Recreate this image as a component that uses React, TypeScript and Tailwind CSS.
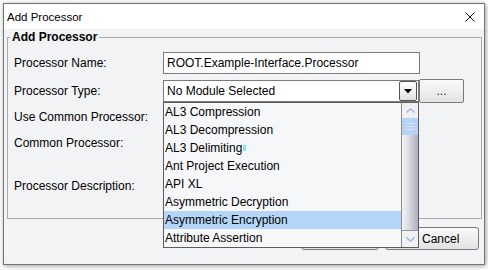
const ITEMS = [
  "AL3 Compression",
  "AL3 Decompression",
  "AL3 Delimiting",
  "Ant Project Execution",
  "API XL",
  "Asymmetric Decryption",
  "Asymmetric Encryption",
  "Attribute Assertion",
];

function Label({ text }: { text: string }) {
  return <span className="w-[149px] shrink-0 text-[12px] leading-[16px] text-black">{text}</span>;
}

export default function App() {
  return (
    <div className="relative h-[270px] w-[488px] overflow-hidden bg-white pl-[3px] pt-[3px] font-['Liberation_Sans',Arial,sans-serif]">
      <div className="flex h-[262px] w-[482px] flex-col border border-[#747474] bg-[#f2f3f5] shadow-[1px_1px_5px_rgba(0,0,0,0.4)]">
        {/* title bar */}
        <div className="flex h-[25px] shrink-0 items-center justify-between bg-white pl-[3px] pr-[9px]">
          <span className="text-[11.5px] leading-[14px] text-black">Add Processor</span>
          <svg width="10" height="10" viewBox="0 0 10 10">
            <path d="M0.5 0.5 L9.5 9.5 M9.5 0.5 L0.5 9.5" stroke="#111" strokeWidth="1" />
          </svg>
        </div>

        <div className="flex flex-1 flex-col">
          <fieldset className="ml-[3px] h-[190px] w-[475px] border border-[#aaaaaa]">
            <legend className="ml-[2px] px-[2px] text-[12px] font-bold leading-[16px] text-black">Add Processor</legend>
            <div className="flex flex-col pl-[6px] pt-[7px]">
              <div className="flex h-[22px] items-center">
                <Label text="Processor Name:" />
                <div className="flex h-[22px] w-[257px] items-center border border-[#7a7a7a] bg-white pl-[3px] text-[12px] text-black">
                  ROOT.Example-Interface.Processor
                </div>
              </div>

              <div className="mt-[6px] flex h-[22px] items-center">
                <Label text="Processor Type:" />
                <div className="relative flex h-[22px] w-[256px] items-center border border-[#7a7a7a] bg-white pl-[3px] text-[12px] text-black">
                  <span className="flex-1">No Module Selected</span>
                  <div className="mr-[1px] flex h-[20px] w-[18px] items-center justify-center rounded-[2px] border border-[#555] bg-gradient-to-b from-white to-[#e2e2e2]">
                    <svg width="8" height="5" viewBox="0 0 8 5">
                      <path d="M0 0 H8 L4 4.5 Z" fill="#000" />
                    </svg>
                  </div>

                  {/* open popup list */}
                  <div className="absolute left-[-1px] top-[21px] z-10 flex h-[146px] w-[256px] border border-[#5c5c5c] bg-[#f6f7f9]">
                    <div className="flex flex-1 flex-col">
                      {ITEMS.map((item) => (
                        <div
                          key={item}
                          className={
                            item === "Asymmetric Encryption"
                              ? "flex h-[18px] items-center bg-[#b5d6f8] pl-[1px] text-[12px] text-black"
                              : "flex h-[18px] items-center pl-[1px] text-[12px] text-black"
                          }
                        >
                          {item}
                          {item === "AL3 Delimiting" && <span className="ml-[1px] h-[6px] w-[3px] bg-[#86e2fb]" />}
                        </div>
                      ))}
                    </div>
                    <div className="flex w-[17px] flex-col border-l border-[#8d8d8d]">
                      <div className="flex h-[15px] items-center justify-center bg-[#eef0f3]">
                        <svg width="9" height="5" viewBox="0 0 9 5">
                          <path d="M0.5 4.5 L4.5 0.8 L8.5 4.5" fill="none" stroke="#8fb3df" strokeWidth="1.2" />
                        </svg>
                      </div>
                      <div className="flex h-[17px] flex-col items-center justify-center gap-[2px] bg-[#b6d3f6]">
                        <span className="h-px w-[8px] bg-[#dbe8fa]" />
                        <span className="h-px w-[8px] bg-[#dbe8fa]" />
                        <span className="h-px w-[8px] bg-[#dbe8fa]" />
                      </div>
                      <div className="flex-1 bg-gradient-to-r from-[#f3f3f6] via-[#d6d6de] to-[#aeaebd]" />
                      <div className="flex h-[17px] items-center justify-center border-t border-[#9a9a9a] bg-[#eef0f3]">
                        <svg width="9" height="5" viewBox="0 0 9 5">
                          <path d="M0.5 0.5 L4.5 4.2 L8.5 0.5" fill="none" stroke="#8fb3df" strokeWidth="1.2" />
                        </svg>
                      </div>
                    </div>
                  </div>
                </div>
                <div className="flex h-[24px] w-[45px] items-center justify-center rounded-[2px] border border-[#7a7a7a] bg-gradient-to-b from-[#fbfbfb] to-[#e3e3e3] text-[12px] text-[#222]">
                  ...
                </div>
              </div>

              <div className="mt-[4px] flex h-[22px] items-center">
                <Label text="Use Common Processor:" />
              </div>
              <div className="mt-[4px] flex h-[22px] items-center">
                <Label text="Common Processor:" />
              </div>
              <div className="mt-[24px] flex items-start">
                <Label text="Processor Description:" />
              </div>
            </div>
          </fieldset>

          <div className="mt-[8px] flex justify-end gap-[6px] pr-[5px]">
            <div className="flex h-[23px] w-[78px] items-center justify-center rounded-[3px] border border-[#7a7a7a] bg-gradient-to-b from-[#fafafa] to-[#e1e1e1] text-[12px] text-black">
              OK
            </div>
            <div className="flex h-[23px] w-[94px] items-center rounded-[3px] border border-[#7a7a7a] bg-gradient-to-b from-[#fafafa] to-[#e1e1e1] pl-[36px] text-[12px] text-black">
              Cancel
            </div>
          </div>
        </div>
      </div>

      {/* red annotation arrow */}
      <svg className="pointer-events-none absolute left-0 top-0" width="488" height="270" viewBox="0 0 488 270">
        <line x1="388" y1="133" x2="333" y2="201" stroke="#f50c0c" strokeWidth="5" strokeLinecap="round" />
        <path d="M316 218 L323 194 L342 209 Z" fill="#f50c0c" stroke="#f50c0c" strokeWidth="1" strokeLinejoin="round" />
      </svg>
    </div>
  );
}
